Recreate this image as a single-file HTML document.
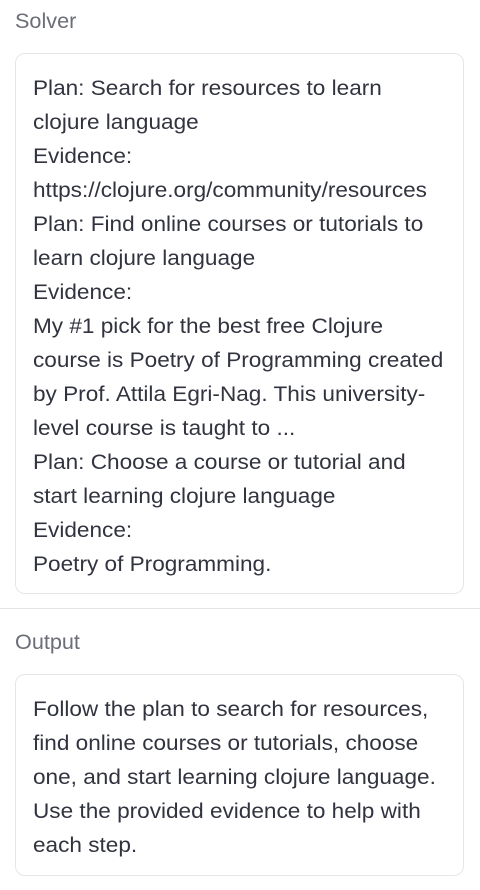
<!DOCTYPE html>
<html><head><meta charset="utf-8"><style>
html,body{margin:0;padding:0;background:#fff;width:480px;height:890px;overflow:hidden}
body{font-family:"Liberation Sans",sans-serif;color:#31333f}
.lbl{position:absolute;left:15px;font-size:21px;color:#6b6e76;transform:scaleX(1.03);transform-origin:left}
.box{position:absolute;left:15px;width:447px;border:1px solid #e6e6ea;border-radius:10px;background:#fff}
.t{position:absolute;left:17px;font-size:21.5px;line-height:34px;white-space:nowrap;transform:scaleX(1.05);transform-origin:left top}
.hr{position:absolute;left:0;top:608px;width:480px;height:1px;background:#e3e3e6}
</style></head><body>
<div class="lbl" style="top:10px">Solver</div>
<div class="box" style="top:53px;height:539px">
<div class="t" style="top:17px">Plan: Search for resources to learn<br>clojure language<br>Evidence:<br>https://clojure.org/community/resources<br>Plan: Find online courses or tutorials to<br>learn clojure language<br>Evidence:<br>My #1 pick for the best free Clojure<br>course is Poetry of Programming created<br>by Prof. Attila Egri-Nag. This university-<br>level course is taught to ...<br>Plan: Choose a course or tutorial and<br>start learning clojure language<br>Evidence:<br>Poetry of Programming.</div>
</div>
<div class="hr"></div>
<div class="lbl" style="top:631px">Output</div>
<div class="box" style="top:674px;height:200px">
<div class="t" style="top:17px">Follow the plan to search for resources,<br>find online courses or tutorials, choose<br>one, and start learning clojure language.<br>Use the provided evidence to help with<br>each step.</div>
</div>
</body></html>
